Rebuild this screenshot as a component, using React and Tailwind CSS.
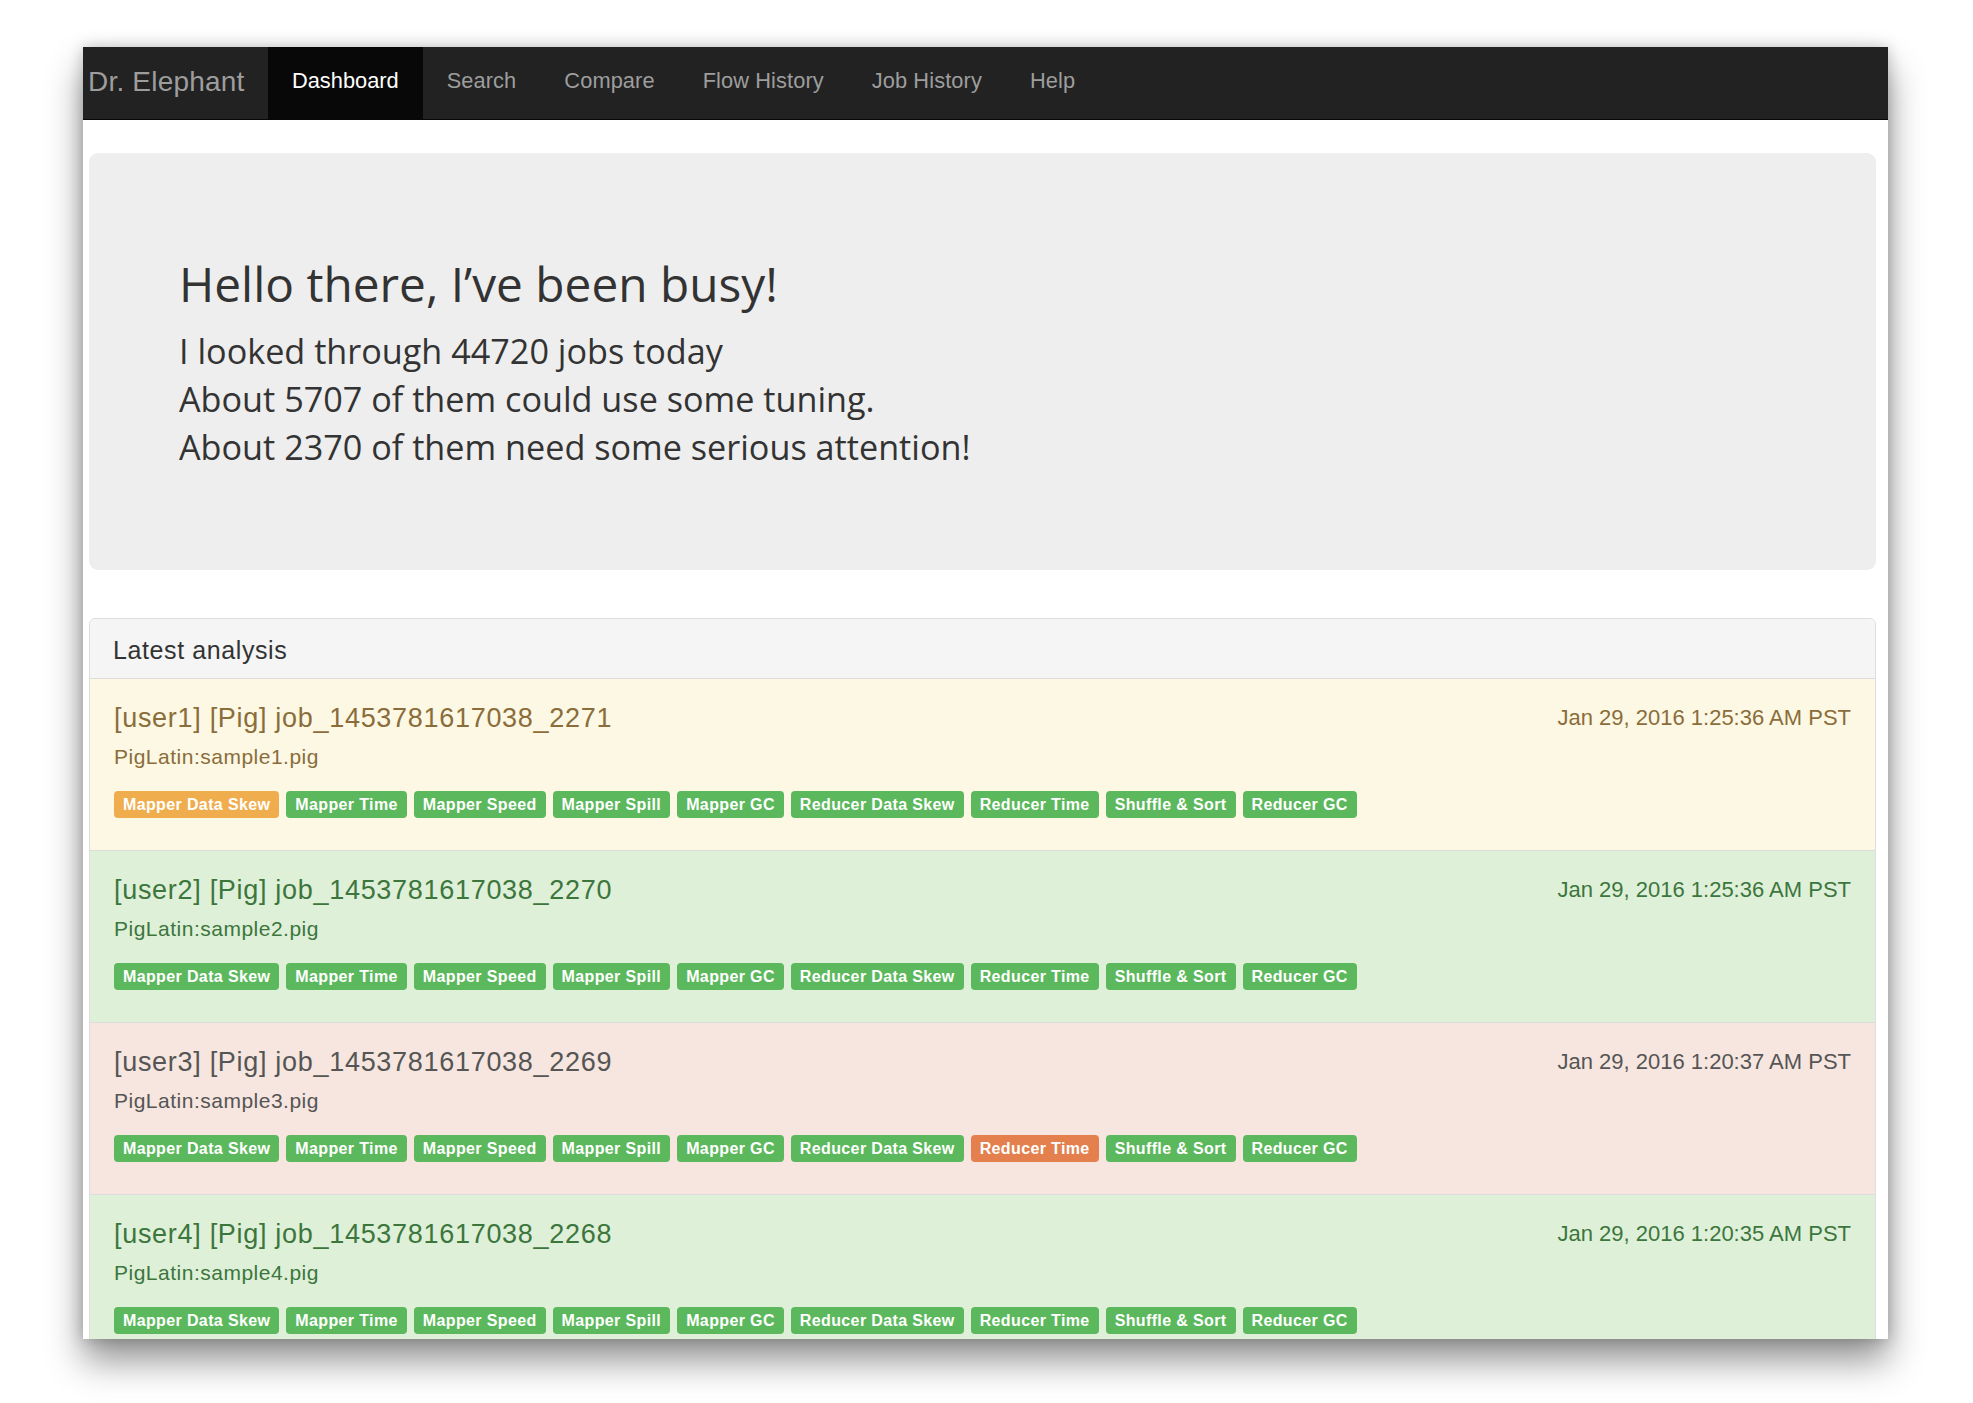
import React from "react";

const NAV = ["Search", "Compare", "Flow History", "Job History", "Help"];

const BADGES = [
  "Mapper Data Skew",
  "Mapper Time",
  "Mapper Speed",
  "Mapper Spill",
  "Mapper GC",
  "Reducer Data Skew",
  "Reducer Time",
  "Shuffle & Sort",
  "Reducer GC",
];

const ROWS = [
  {
    title: "[user1] [Pig] job_1453781617038_2271",
    sub: "PigLatin:sample1.pig",
    date: "Jan 29, 2016 1:25:36 AM PST",
    row: "bg-[#fcf8e3] text-[#8a6d3b]",
    special: { "Mapper Data Skew": "bg-[#f0ad4e]" },
  },
  {
    title: "[user2] [Pig] job_1453781617038_2270",
    sub: "PigLatin:sample2.pig",
    date: "Jan 29, 2016 1:25:36 AM PST",
    row: "bg-[#dff0d8] text-[#3c763d]",
    special: {},
  },
  {
    title: "[user3] [Pig] job_1453781617038_2269",
    sub: "PigLatin:sample3.pig",
    date: "Jan 29, 2016 1:20:37 AM PST",
    row: "bg-[#f6e6df] text-[#555555]",
    special: { "Reducer Time": "bg-[#e4804e]" },
  },
  {
    title: "[user4] [Pig] job_1453781617038_2268",
    sub: "PigLatin:sample4.pig",
    date: "Jan 29, 2016 1:20:35 AM PST",
    row: "bg-[#dff0d8] text-[#3c763d]",
    special: {},
  },
];

function Badge({ label, color }) {
  return (
    <span
      className={`${color} h-[27px] px-[9px] rounded-[4px] text-[16px] leading-[27px] font-bold tracking-[0.37px] text-white whitespace-nowrap`}
    >
      {label}
    </span>
  );
}

function Row({ r, first }) {
  return (
    <div
      className={`${r.row} ${first ? "" : "border-t border-[#dddddd]"} pl-[24px] pr-[24px] pt-[23px] pb-[32px]`}
    >
      <div className="flex justify-between items-start">
        <div className="text-[27px] leading-[32px] tracking-[0.7px]">{r.title}</div>
        <div className="text-[22px] leading-[32px]">{r.date}</div>
      </div>
      <div className="mt-[9px] text-[21px] leading-[28px] tracking-[0.5px]">{r.sub}</div>
      <div className="mt-[20px] flex gap-[7px]">
        {BADGES.map((b) => (
          <Badge key={b} label={b} color={r.special[b] || "bg-[#5cb85c]"} />
        ))}
      </div>
    </div>
  );
}

export default function App() {
  return (
    <div
      className="w-[1973px] h-[1403px] bg-white overflow-hidden pt-[47px] pl-[83px]"
      style={{ fontFamily: '"Liberation Sans", Arial, sans-serif' }}
    >
      <div className="w-[1805px] h-[1292px] bg-white overflow-hidden shadow-[0_22px_34px_rgba(0,0,0,0.42),0_0_14px_rgba(0,0,0,0.22)]">
        {/* Navbar */}
        <div className="h-[73px] bg-[#222222] border-b border-[#080808] flex items-stretch">
          <div className="w-[185px] pl-[5px] pb-[3px] flex items-center text-[28px] tracking-[0.2px] text-[#9d9d9d]">
            Dr. Elephant
          </div>
          <div className="px-6 pb-[3px] flex items-center bg-[#080808] text-white text-[21.8px]">Dashboard</div>
          {NAV.map((n) => (
            <div key={n} className="px-6 pb-[3px] flex items-center text-[#9d9d9d] text-[21.8px] tracking-[0.1px]">
              {n}
            </div>
          ))}
        </div>

        {/* Content */}
        <div className="pl-[6px] pr-[12px] pt-[33px]">
          <div
            className="bg-[#eeeeee] rounded-[9px] pl-[90px] pt-[103px] pb-[99px] text-[#333333]"
            style={{ fontFamily: '"Open Sans", "Noto Sans", sans-serif' }}
          >
            <h1 className="text-[47.8px] leading-[56px] font-normal">Hello there, I’ve been busy!</h1>
            <div className="mt-[15px] text-[34.2px] leading-[48px]">
              <p>I looked through 44720 jobs today</p>
              <p>About 5707 of them could use some tuning.</p>
              <p>About 2370 of them need some serious attention!</p>
            </div>
          </div>

          <div className="mt-[48px] border border-[#dddddd] rounded-t-[6px] overflow-hidden">
            <div className="h-[60px] bg-[#f5f5f5] border-b border-[#dddddd] pl-[23px] pt-[17px] text-[25px] leading-[28px] tracking-[0.6px] text-[#333333]">
              Latest analysis
            </div>
            {ROWS.map((r, i) => (
              <Row key={r.title} r={r} first={i === 0} />
            ))}
          </div>
        </div>
      </div>
    </div>
  );
}
